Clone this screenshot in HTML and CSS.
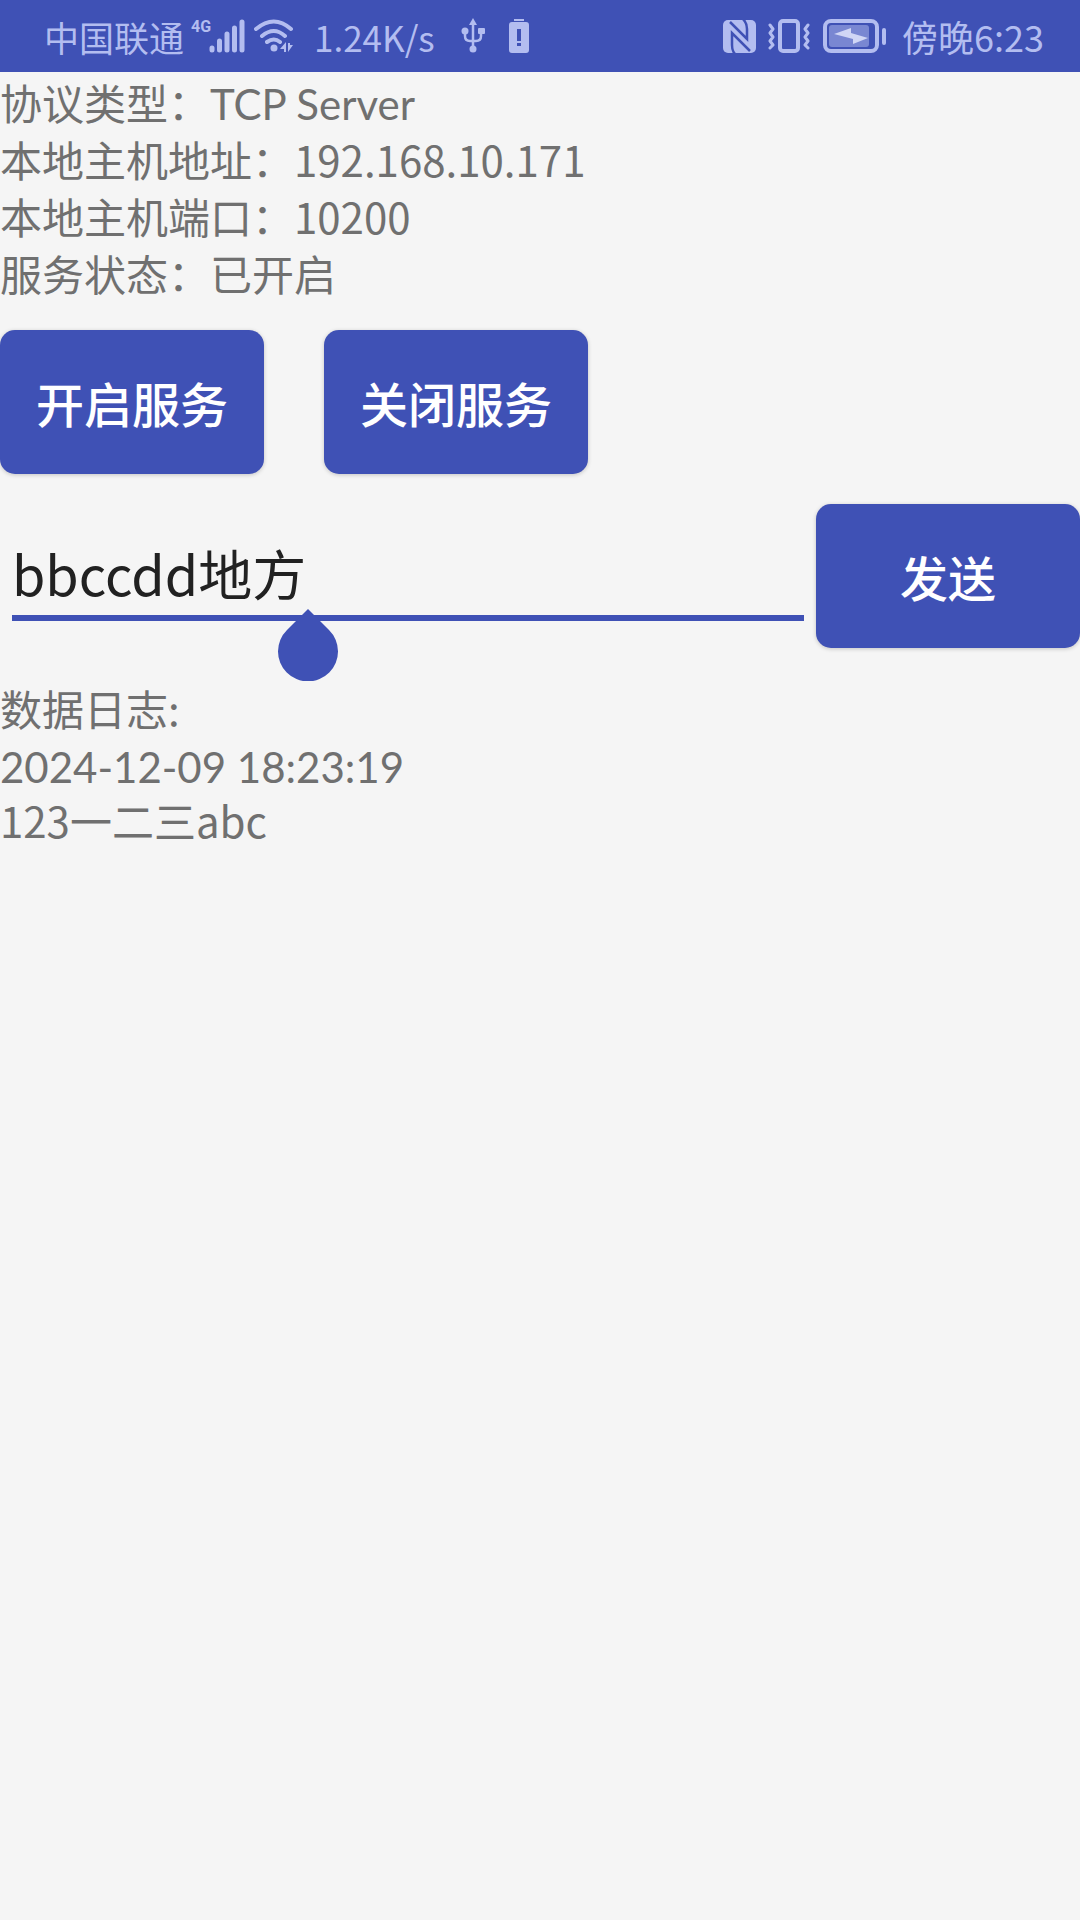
FILE: index.html
```html
<!DOCTYPE html>
<html lang="zh-CN">
<head>
<meta charset="utf-8">
<meta name="viewport" content="width=device-width, initial-scale=1">
<title>TCP Server</title>
<link rel="stylesheet" href="styles.css">
</head>
<body>
<header class="status-bar">
  <div class="status-group">
    <span class="carrier">中国联通</span>
    <span class="network">4G</span>
    <svg class="signal" width="36" height="34" viewBox="0 0 36 34" aria-hidden="true">
      <g stroke="currentColor" stroke-width="5" stroke-linecap="round">
        <path d="M3 29v2M10.500 22v9M18 15v16M25.500 9v22M33 3v28"/>
      </g>
    </svg>
    <svg class="wifi" width="40" height="34" viewBox="0 0 40 34" aria-hidden="true">
      <g fill="none" stroke="currentColor" stroke-width="4" stroke-linecap="round">
        <path d="M2 10Q20 -5 37 10M8 17Q20 7 31 17M13 23Q20 18 26 23"/>
      </g>
      <circle cx="20" cy="29" r="3.500" fill="currentColor"/>
      <path d="M26 30l6-7v10h-2v-3zM34 24v9l5-7h-3v-2z" fill="currentColor"/>
    </svg>
    <span class="speed">1.24K/s</span>
    <svg class="usb" width="24" height="36" viewBox="0 0 24 36" aria-hidden="true">
      <path d="M12 6v26M4 14v4q0 5 5 5h6q5 0 5-5v-4" fill="none" stroke="currentColor" stroke-width="2.500"/>
      <path d="M12 0l4 7H8z" fill="currentColor"/>
      <circle cx="4" cy="13" r="3.500" fill="currentColor"/>
      <rect x="17" y="10" width="7" height="6" rx="1" fill="currentColor"/>
      <circle cx="12" cy="31" r="3.500" fill="currentColor"/>
    </svg>
    <svg class="battery-alert" width="20" height="36" viewBox="0 0 20 36" aria-hidden="true">
      <path fill="currentColor" fill-rule="evenodd" d="M5 1h10v2H5zM3 4h14q3 0 3 3v25q0 3-3 3H3q-3 0-3-3V7q0-3 3-3zM8 11v12h4V11zM8 25v3h4v-3z"/>
    </svg>
  </div>
  <div class="status-group">
    <svg class="nfc" width="33" height="33" viewBox="0 0 33 33" aria-hidden="true">
      <rect width="33" height="33" rx="5" fill="currentColor"/>
      <path d="M7 2L24 19V9Q24 3 20 -1M12 34Q9 31 9 25V13L27 31" fill="none" stroke="#3f51b5" stroke-width="2.500"/>
    </svg>
    <svg class="vibrate" width="42" height="34" viewBox="0 0 42 34" aria-hidden="true">
      <g fill="none" stroke="currentColor" stroke-width="4" stroke-linejoin="round" stroke-linecap="round">
        <rect x="12" y="2" width="18" height="30" rx="3"/>
        <path stroke-width="3" d="M2 6l3 4-3 4 3 4-3 4 3 4-3 3M40 6l-3 4 3 4-3 4 3 4-3 4 3 3"/>
      </g>
    </svg>
    <svg class="battery" width="64" height="34" viewBox="0 0 64 34" aria-hidden="true">
      <rect x="2" y="2" width="52" height="30" rx="6" fill="none" stroke="currentColor" stroke-width="4"/>
      <rect x="6" y="6" width="40" height="22" rx="3" fill="currentColor" opacity=".5"/>
      <rect x="59" y="9" width="4" height="17" rx="2" fill="currentColor"/>
      <path d="M11 15l17-6v5l17 5-15 6v-5z" fill="#d0d6f5"/>
    </svg>
    <span class="clock">傍晚6:23</span>
  </div>
</header>
<main>
  <section class="info">
    <p>协议类型：<span class="latin">TCP Server</span></p>
    <p>本地主机地址：192.168.10.171</p>
    <p>本地主机端口：10200</p>
    <p>服务状态：已开启</p>
  </section>
  <div class="actions">
    <button class="btn" type="button">开启服务</button>
    <button class="btn" type="button">关闭服务</button>
  </div>
  <form class="composer">
    <div class="field">
      <input class="message" type="text" value="bbccdd地方" aria-label="发送内容">
      <svg class="handle" width="60" height="72" viewBox="0 0 60 72" aria-hidden="true">
        <path d="M30 0L51 21A30 30 0 1 1 9 21z" fill="#3f51b5"/>
      </svg>
    </div>
    <button class="btn" type="button">发送</button>
  </form>
  <section class="log">
    <p>数据日志:</p>
    <p><time class="latin">2024-12-09 18:23:19</time></p>
    <p class="entry">123一二三abc</p>
  </section>
</main>
</body>
</html>
```
FILE: styles.css
```css
* {
  box-sizing: border-box;
}

body {
  margin: 0;
  min-height: 100vh;
  background: #f5f5f5;
  color: #707070;
  font-family: "Noto Sans CJK SC", sans-serif;
  font-size: 42px;
  line-height: 57px;
}

p {
  margin: 0;
}

.latin {
  font-family: Lato, sans-serif;
  line-height: 1;
}

.status-bar {
  display: flex;
  justify-content: space-between;
  align-items: center;
  height: 72px;
  padding: 0 36px 0 44px;
  background: #3f51b5;
  color: #b3bdf0;
  font-size: 35px;
}

.status-group {
  display: flex;
  align-items: center;
  white-space: nowrap;
}

.status-group svg {
  display: block;
  flex: none;
}

.network {
  align-self: flex-start;
  width: 18px;
  margin: 7px 0 0 7px;
  font-family: Roboto, sans-serif;
  font-size: 16px;
  font-weight: 700;
  line-height: 24px;
}

.wifi {
  margin-left: 9px;
}

.speed {
  margin-left: 20px;
}

.usb {
  margin-left: 26px;
}

.battery-alert {
  margin-left: 24px;
}

.vibrate {
  margin-left: 12px;
}

.battery {
  margin-left: 13px;
}

.clock {
  margin-left: 15px;
  font-size: 36px;
}

.info {
  padding-top: 1px;
}

.actions {
  display: flex;
  gap: 60px;
  margin-top: 29px;
}

.btn {
  flex: none;
  width: 264px;
  height: 144px;
  padding: 0;
  border: 0;
  border-radius: 15px;
  background: #3f51b5;
  box-shadow: 0 1px 4px #0003;
  color: #fff;
  font: 500 48px/72px "Noto Sans CJK SC", sans-serif;
}

.composer {
  display: flex;
  margin-top: 30px;
}

.field {
  position: relative;
  flex: 1;
  padding: 28px 12px 0;
}

.message {
  display: block;
  width: 100%;
  height: 89px;
  padding: 0 0 2px;
  border: 0;
  border-bottom: 6px solid #3f51b5;
  outline: 0;
  background: none;
  color: #212121;
  font: 54px/81px "Noto Sans CJK SC", sans-serif;
}

.handle {
  position: absolute;
  top: 105px;
  left: 278px;
}

.log {
  padding-top: 31px;
}

.entry {
  line-height: 53px;
}
```
